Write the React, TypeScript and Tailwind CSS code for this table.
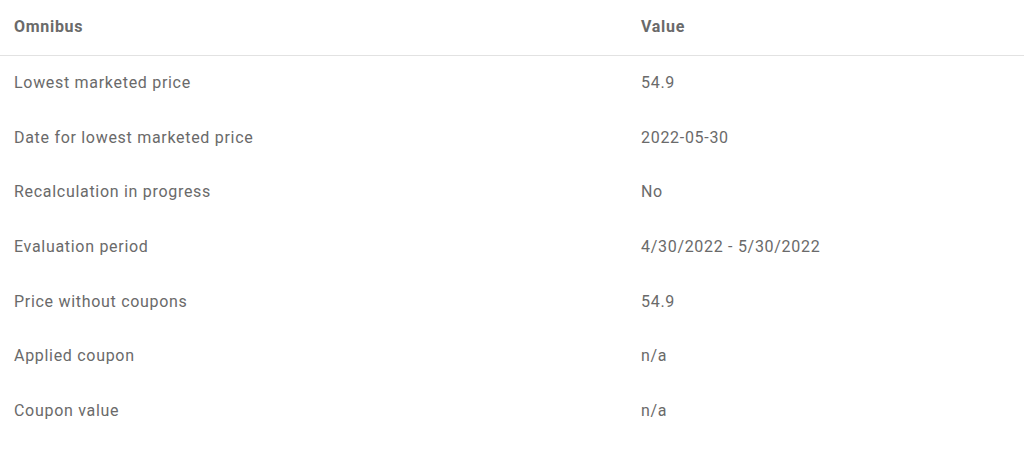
const rows = [
  { label: 'Lowest marketed price', value: '54.9' },
  { label: 'Date for lowest marketed price', value: '2022-05-30' },
  { label: 'Recalculation in progress', value: 'No' },
  { label: 'Evaluation period', value: '4/30/2022 - 5/30/2022' },
  { label: 'Price without coupons', value: '54.9' },
  { label: 'Applied coupon', value: 'n/a' },
  { label: 'Coupon value', value: 'n/a' },
]

export default function App() {
  return (
    <div className="w-[1024px] h-[457px] bg-white font-['Roboto',sans-serif] text-[16px] tracking-[0.7px] text-[#6a6a6a]">
      <div className="flex h-[56px] items-center pb-[2px] border-b border-[#e2e2e2]">
        <div className="w-[641px] pl-[14px] font-bold">Omnibus</div>
        <div className="font-bold">Value</div>
      </div>
      {rows.map((row) => (
        <div key={row.label} className="flex h-[54.6px] items-center">
          <div className="w-[641px] pl-[14px]">{row.label}</div>
          <div>{row.value}</div>
        </div>
      ))}
    </div>
  )
}
